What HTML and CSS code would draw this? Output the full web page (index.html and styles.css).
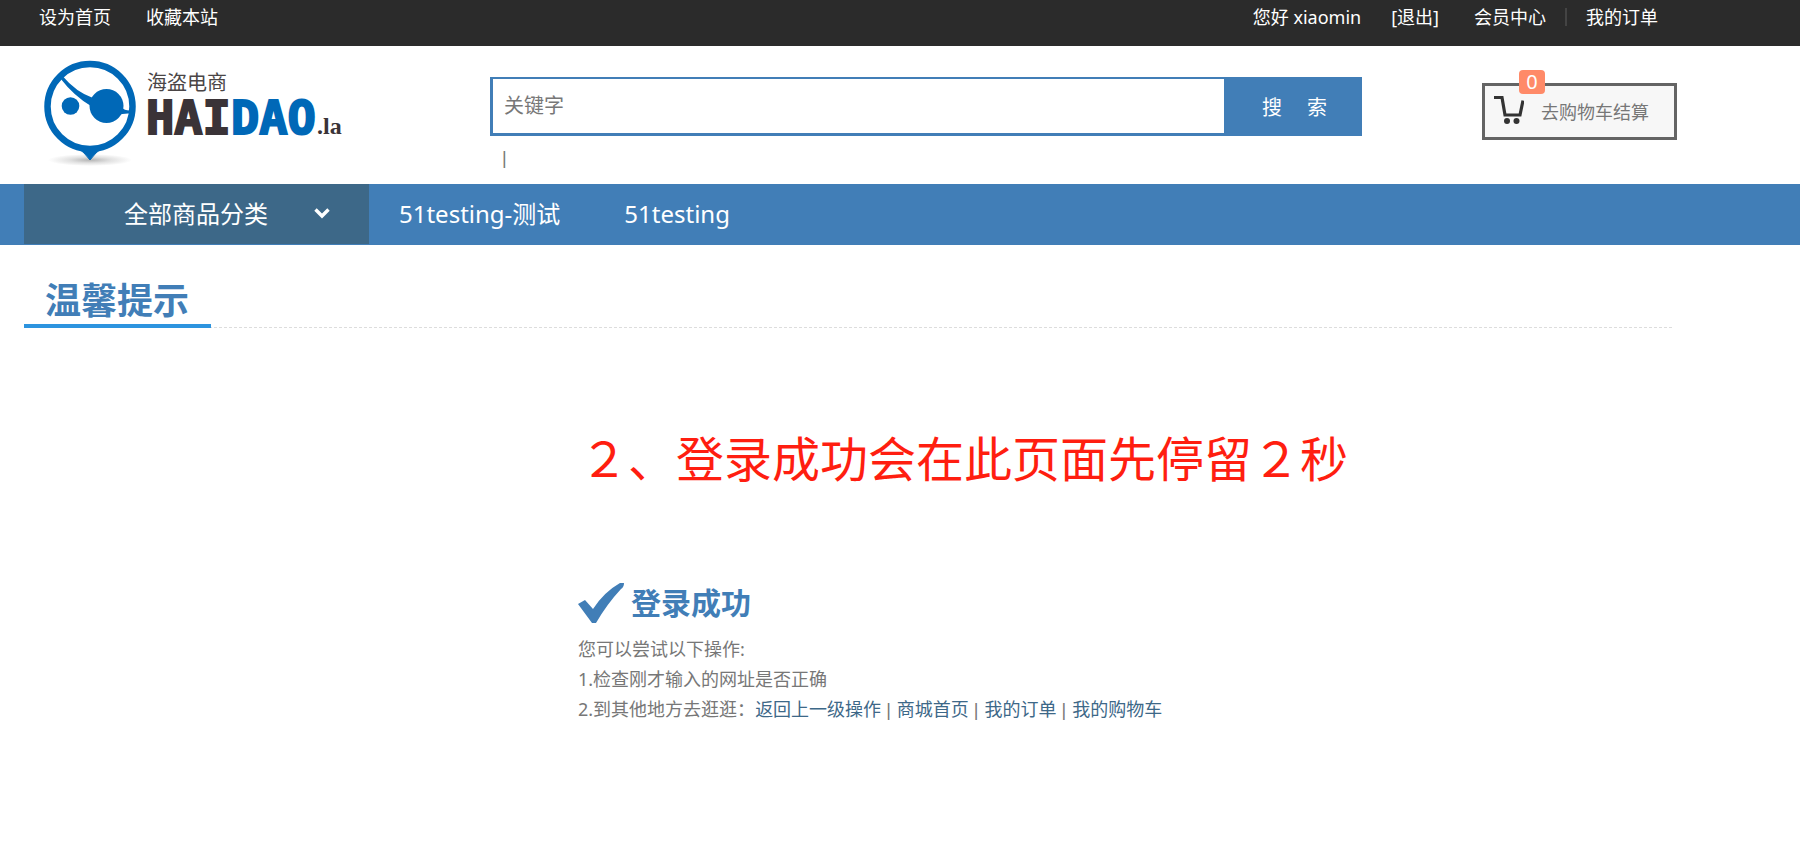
FILE: index.html
```html
<!DOCTYPE html>
<html lang="zh-CN">
<head>
<meta charset="utf-8">
<meta name="viewport" content="width=device-width, initial-scale=1">
<title>温馨提示</title>
<link rel="stylesheet" href="styles.css">
</head>
<body>
<div class="topbar">
  <nav class="wrap topbar-inner">
    <a class="top-link" href="#">设为首页</a>
    <a class="top-link top-fav" href="#">收藏本站</a>
    <span class="top-user">您好 xiaomin</span>
    <a class="top-link" href="#">[退出]</a>
    <div class="top-account">
      <a class="top-link" href="#">会员中心</a>
      <i class="divider"></i>
      <a class="top-link" href="#">我的订单</a>
    </div>
  </nav>
</div>

<header class="wrap header">
  <a class="logo" href="#" aria-label="海盗电商">
    <svg width="310" height="112" viewBox="40 56 310 112">
      <defs>
        <radialGradient id="shade">
          <stop offset="0" stop-color="#b4b4b4"/>
          <stop offset="0.5" stop-color="#e2e2e2"/>
          <stop offset="1" stop-color="#ffffff"/>
        </radialGradient>
      </defs>
      <ellipse cx="90" cy="160" rx="42" ry="6" fill="url(#shade)"/>
      <path d="M78 148Q84 152 90 160Q96 152 102 148Z" fill="#0068b7" stroke="#0068b7"/>
      <circle cx="90" cy="106.500" r="42.500" fill="#fff" stroke="#0068b7" stroke-width="6.500"/>
      <circle cx="70.500" cy="106" r="8.800" fill="#0068b7"/>
      <circle cx="106.500" cy="106" r="17" fill="#0068b7"/>
      <path d="M60 78L62.500 76Q76 92 93 98L91 106Q74 96 60 78ZM121 107Q125 111 131 110.500V113.500Q123 113 118 115Z" fill="#0068b7"/>
      <text class="logo-cn" x="147" y="90">海盗电商</text>
      <text class="logo-name" x="146" y="134">HAI<tspan class="logo-blue">DAO</tspan></text>
      <text class="logo-la" x="317" y="134">.la</text>
    </svg>
  </a>
  <div class="search-area">
    <form class="search">
      <input class="search-input" type="text" placeholder="关键字" aria-label="关键字">
      <button class="search-btn" type="button">搜　&nbsp;索</button>
    </form>
    <div class="hot">|</div>
  </div>
  <a class="cart" href="#">
    <svg class="cart-icon" width="30" height="28" viewBox="0 0 30 28">
      <path d="M0 1.500H8L11 19H26L29 4.500" fill="none" stroke="#333" stroke-width="3.200"/>
      <circle cx="13" cy="25" r="3" fill="#333"/>
      <circle cx="22.500" cy="25" r="3" fill="#333"/>
    </svg>
    去购物车结算
    <span class="badge">0</span>
  </a>
</header>

<div class="mainnav">
  <nav class="wrap mainnav-inner">
    <a class="category" href="#">全部商品分类
      <svg class="chevron" width="16" height="11" viewBox="0 0 16 11"><path d="M1.500 1.500L8 8L14.500 1.500" fill="none" stroke="#fff" stroke-width="3.400"/></svg>
    </a>
    <a class="nav-link" href="#">51testing-测试</a>
    <a class="nav-link" href="#">51testing</a>
  </nav>
</div>

<main class="wrap">
  <div class="title-row"><h1 class="title">温馨提示</h1></div>
  <section class="result">
    <p class="note">２、登录成功会在此页面先停留２秒</p>
    <h2 class="success">
      <svg width="46" height="42" viewBox="0 0 46 42"><path d="M0 22L7 18L15 27Q26 10 42 1H46Q46 5 43 7Q29 22 18 41H14Z" fill="#417eb7"/></svg>
      登录成功
    </h2>
    <p class="tip">您可以尝试以下操作:</p>
    <p class="tip">1.检查刚才输入的网址是否正确</p>
    <p class="tip">2.到其他地方去逛逛：<a href="#">返回上一级操作</a><span class="sep"> | </span><a href="#">商城首页</a><span class="sep"> | </span><a href="#">我的订单</a><span class="sep"> | </span><a href="#">我的购物车</a></p>
  </section>
</main>
</body>
</html>
```

FILE: styles.css
```css
* { box-sizing: border-box; }
body {
  margin: 0;
  background: #fff;
  color: #777;
  font-family: "Noto Sans", "Noto Sans CJK SC", sans-serif;
  font-size: 18px;
  line-height: 30px;
}
h1, h2, p { margin: 0; }
a { text-decoration: none; }
svg { display: block; flex: none; }
.wrap { margin: 0 123px 0 24px; }

.topbar { background: #2b2b2b; height: 46px; color: #fff; }
.topbar-inner { display: flex; padding: 2px 19px 0 15px; }
.top-link { color: #fff; }
.top-fav { margin-left: 35px; }
.top-user { margin: 0 30px 0 auto; }
.top-account { display: flex; align-items: center; gap: 19px; margin-left: 35px; }
.divider { width: 2px; height: 18px; background: #444; }

.header { display: grid; grid-template-columns: 466px 1fr 315px; height: 138px; }
.logo { padding: 10px 0 0 16px; }
.logo-cn { font-family: "Noto Sans CJK SC", sans-serif; font-size: 20px; fill: #4a4546; }
.logo-name { font-family: "DejaVu Sans Mono", monospace; font-size: 47px; font-weight: 700; fill: #3a3337; stroke: #3a3337; stroke-width: 2px; }
.logo-blue { fill: #0068b7; stroke: #0068b7; }
.logo-la { font-family: "Liberation Serif", serif; font-size: 24px; font-weight: 700; fill: #3a3337; }
.search-area { padding-top: 31px; }
.search { display: flex; height: 59px; background: #417eb7; }
.search-input {
  flex: 1;
  min-width: 0;
  border: solid #417eb7;
  border-width: 2px 0 3px 3px;
  padding: 0 11px;
  background: #fff;
  font: inherit;
  font-size: 20px;
  outline: 0;
}
.search-input::placeholder { color: #777; opacity: 1; }
.search-btn { width: 138px; border: 0; padding: 2px 0 0 3px; background: #417eb7; color: #fff; font: inherit; font-size: 20px; }
.hot { padding: 7px 12px; font-family: "Liberation Sans", sans-serif; }
.cart {
  position: relative;
  justify-self: end;
  display: flex;
  align-items: center;
  gap: 17px;
  width: 195px;
  height: 57px;
  margin-top: 37px;
  padding-left: 9px;
  border: 3px solid #646464;
  background: #f7f7f7;
  color: #777;
}
.cart-icon { margin-bottom: 4px; }
.badge {
  position: absolute;
  left: 34px;
  top: -16px;
  width: 26px;
  height: 24px;
  border-radius: 4px;
  background: #ff8a68;
  color: #fff;
  font-size: 20px;
  line-height: 24px;
  text-align: center;
}

.mainnav { background: #417eb7; height: 61px; font-size: 24px; line-height: 60px; }
.mainnav-inner { display: flex; gap: 64px; }
.category {
  display: flex;
  align-items: center;
  justify-content: flex-end;
  gap: 46px;
  width: 345px;
  height: 60px;
  margin-right: -34px;
  padding-right: 39px;
  background: #3d6888;
  color: #fff;
}
.chevron { margin-bottom: 2px; }
.nav-link { color: #fff; }

.title-row { display: flex; margin-top: 28px; margin-right: 3px; background: linear-gradient(90deg, #ddd 60%, transparent 60%) 0 54px / 5px 1px repeat-x; }
.title {
  padding: 4px 22px 0 21px;
  border-bottom: 4px solid #2d94df;
  color: #417eb7;
  font-size: 36px;
  line-height: 47px;
}
.result { width: max-content; margin: 98px auto 0 554px; }
.note { padding-left: 2px; color: #ff1e10; font-size: 48px; line-height: 66px; }
.success { display: flex; align-items: center; gap: 7px; margin: 88px 0 8px; color: #417eb7; font-size: 30px; line-height: 46px; }
.tip a { color: #3d6888; }
.sep { margin-right: 1px; font-family: "Liberation Sans", sans-serif; }
```
